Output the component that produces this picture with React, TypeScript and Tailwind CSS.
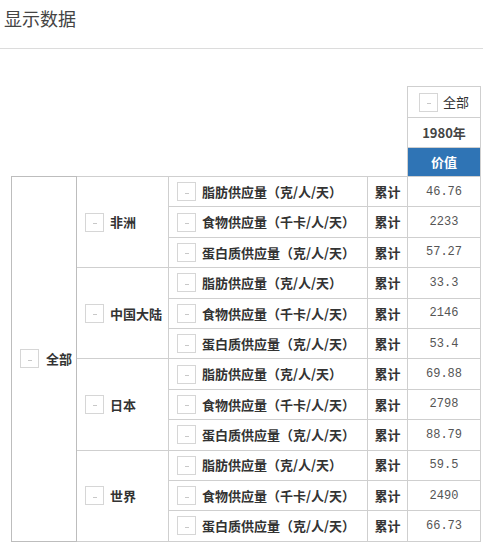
import React from "react";

const groups = [
  { name: "非洲", vals: ["46.76", "2233", "57.27"] },
  { name: "中国大陆", vals: ["33.3", "2146", "53.4"] },
  { name: "日本", vals: ["69.88", "2798", "88.79"] },
  { name: "世界", vals: ["59.5", "2490", "66.73"] },
];

const measures = ["脂肪供应量（克/人/天）", "食物供应量（千卡/人/天）", "蛋白质供应量（克/人/天）"];

// 小方框（折叠按钮）
const Box = () => (
  <span className="inline-flex h-[19px] w-[19px] shrink-0 items-center justify-center border border-[#d6d6d6] bg-white">
    <span className="mt-[3px] h-px w-[4px] bg-[#c8c8c8]" />
  </span>
);

const cjk = { fontFamily: '"Noto Sans CJK SC", "Liberation Sans", sans-serif' };

export default function App() {
  return (
    <div className="h-[545px] w-[483px] overflow-hidden bg-white text-[#333]" style={cjk}>
      <div className="h-[49px] border-b border-[#dcdcdc] pl-[4px] pt-[5px] text-[18px] leading-[26px] text-[#444]">
        显示数据
      </div>

      <table className="ml-[11px] mt-[37px] w-[469px] table-fixed border-collapse text-[13px]">
        <colgroup>
          <col className="w-[65px]" />
          <col className="w-[92px]" />
          <col className="w-[199px]" />
          <col className="w-[40px]" />
          <col className="w-[73px]" />
        </colgroup>
        <thead>
          <tr className="h-[31px]">
            <th colSpan={4} />
            <th className="border border-[#cfcfcf] px-0 font-normal">
              <div className="flex items-center gap-[5px] pl-[11px]">
                <Box />
                <span>全部</span>
              </div>
            </th>
          </tr>
          <tr className="h-[30px]">
            <th colSpan={4} />
            <th className="border border-[#cfcfcf] font-bold text-[#444]">1980年</th>
          </tr>
          <tr className="h-[29px]">
            <th colSpan={4} />
            <th className="border border-[#cfcfcf] bg-[#2f74b5] font-bold text-white">价值</th>
          </tr>
        </thead>
        <tbody>
          {groups.map((g, gi) =>
            measures.map((m, mi) => (
              <tr key={g.name + mi} className="h-[30.4px]">
                {gi === 0 && mi === 0 && (
                  <td rowSpan={12} className="border border-[#bdbdbd] align-middle">
                    <div className="flex items-center gap-[7px] pl-[8px] font-bold">
                      <Box />
                      <span>全部</span>
                    </div>
                  </td>
                )}
                {mi === 0 && (
                  <td rowSpan={3} className="border border-[#cfcfcf] align-middle">
                    <div className="flex items-center gap-[6px] pl-[8px] font-bold">
                      <Box />
                      <span>{g.name}</span>
                    </div>
                  </td>
                )}
                <td className="border border-[#cfcfcf] px-0">
                  <div className="flex items-center gap-[6px] pl-[8px] font-bold">
                    <Box />
                    <span className="whitespace-nowrap">{m}</span>
                  </div>
                </td>
                <td className="border border-[#cfcfcf] text-center font-bold">累计</td>
                <td
                  className="border border-[#cfcfcf] text-center text-[12px] text-[#555]"
                  style={{ fontFamily: '"Liberation Mono", monospace' }}
                >
                  {g.vals[mi]}
                </td>
              </tr>
            ))
          )}
        </tbody>
      </table>
    </div>
  );
}
